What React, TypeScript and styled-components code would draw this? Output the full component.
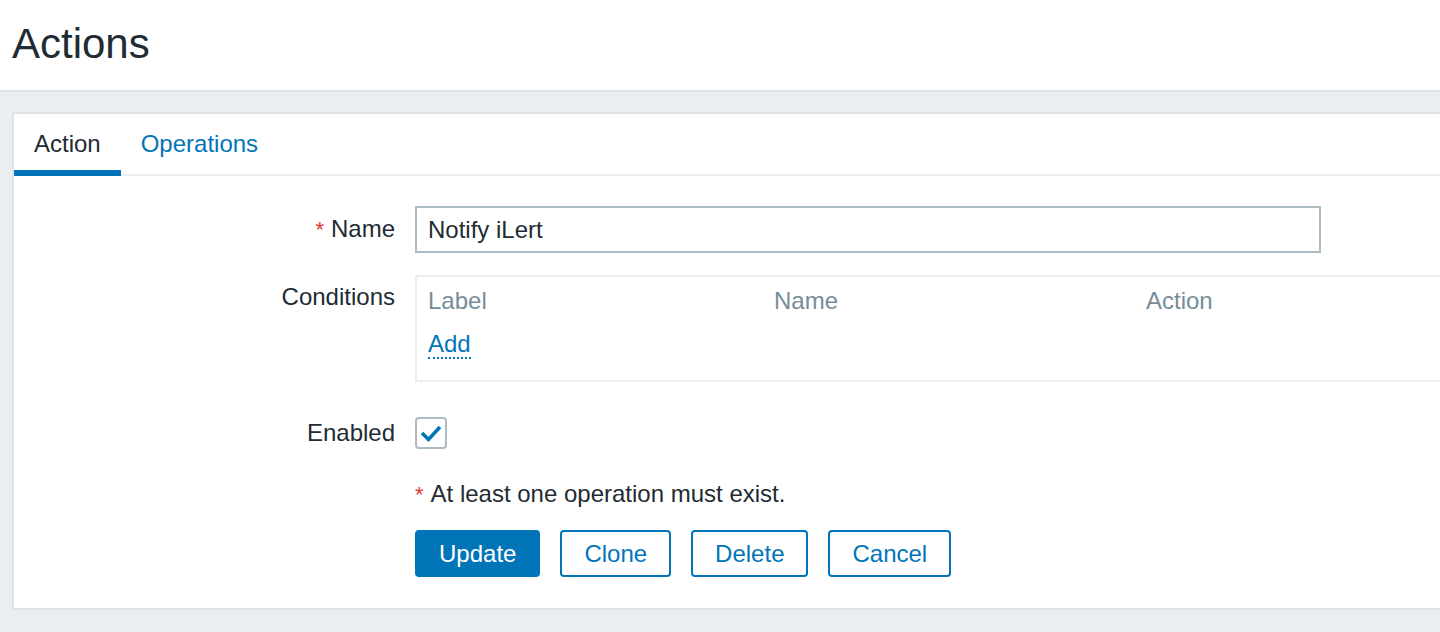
import React from "react";
import styled, { createGlobalStyle } from "styled-components";

const Global = createGlobalStyle`
  html, body {
    margin: 0;
    padding: 0;
    background: #ebeef0;
    overflow: hidden;
  }
  body {
    font-family: "Liberation Sans", Arial, Helvetica, sans-serif;
    color: #1f2c33;
  }
  * { box-sizing: border-box; }
`;

const Page = styled.div`
  width: 1440px;
  height: 632px;
  overflow: hidden;
  background: #ebeef0;
`;

const Header = styled.header`
  height: 92px;
  background: #ffffff;
  border-bottom: 2px solid #dde3e7;
  display: flex;
  align-items: center;
  padding: 0 0 2px 12px;
`;

const Title = styled.h1`
  margin: 0;
  font-size: 42px;
  font-weight: 400;
  line-height: 48px;
  color: #1f2c33;
`;

const Main = styled.main`
  padding: 20px 0 0 12px;
`;

const Panel = styled.section`
  width: 1600px;
  height: 498px;
  background: #ffffff;
  border: 2px solid #dfe4e7;
`;

const Tabs = styled.nav`
  display: flex;
  height: 62px;
  border-bottom: 2px solid #ebeef0;
`;

const Tab = styled.div<{ $active?: boolean }>`
  height: 62px;
  margin-bottom: -2px;
  padding: 0 20px 2px;
  display: flex;
  align-items: center;
  font-size: 24px;
  color: ${(p) => (p.$active ? "#1f2c33" : "#0275b8")};
  box-shadow: ${(p) => (p.$active ? "inset 0 -6px 0 #0275b8" : "none")};
`;

const Form = styled.div`
  padding-top: 30px;
  display: flex;
  flex-direction: column;
`;

const Row = styled.div<{ $align?: string; $mt?: number }>`
  display: grid;
  grid-template-columns: 381px 1fr;
  column-gap: 20px;
  align-items: ${(p) => p.$align || "center"};
  margin-top: ${(p) => p.$mt || 0}px;
`;

const Label = styled.label<{ $pt?: number }>`
  text-align: right;
  font-size: 24px;
  line-height: 28px;
  padding-top: ${(p) => p.$pt || 0}px;
  color: #1f2c33;
`;

const Req = styled.span`
  color: #e33734;
  font-size: 22px;
  margin-right: 7px;
`;

const Input = styled.input`
  width: 906px;
  height: 47px;
  border: 2px solid #acbbc2;
  padding: 0 11px;
  font-family: inherit;
  font-size: 24px;
  color: #1f2c33;
  outline: none;
  background: #fff;
`;

const CondBox = styled.div`
  width: 1200px;
  border: 2px solid #ebeef0;
  padding: 10px 11px 21px;
  display: flex;
  flex-direction: column;
`;

const CondHead = styled.div`
  display: grid;
  grid-template-columns: 346px 372px auto;
  font-size: 24px;
  line-height: 28px;
  color: #768d99;
`;

const AddRow = styled.div`
  display: flex;
  margin-top: 16px;
`;

const Link = styled.a`
  display: inline-block;
  font-size: 24px;
  line-height: 26px;
  color: #0275b8;
  text-decoration: none;
  border-bottom: 2px dotted #0275b8;
  cursor: pointer;
`;

const CheckBox = styled.span`
  width: 32px;
  height: 32px;
  border: 2px solid #acbbc2;
  border-radius: 4px;
  display: flex;
  align-items: center;
  justify-content: center;
  background: #fff;
`;

const Message = styled.div`
  margin-left: 401px;
  margin-top: 31px;
  font-size: 24px;
  line-height: 28px;
  color: #1f2c33;
`;

const Buttons = styled.div`
  margin-left: 401px;
  margin-top: 21px;
  display: flex;
  gap: 20px;
`;

const Button = styled.button<{ $primary?: boolean }>`
  height: 47px;
  padding: 0 22px;
  border: 2px solid #0275b8;
  border-radius: 4px;
  font-family: inherit;
  font-size: 24px;
  background: ${(p) => (p.$primary ? "#0275b8" : "#ffffff")};
  color: ${(p) => (p.$primary ? "#ffffff" : "#0275b8")};
  cursor: pointer;
`;

export default function App() {
  return (
    <Page>
      <Global />
      <Header>
        <Title>Actions</Title>
      </Header>
      <Main>
        <Panel>
          <Tabs>
            <Tab $active>Action</Tab>
            <Tab>Operations</Tab>
          </Tabs>
          <Form>
            <Row>
              <Label>
                <Req>*</Req>Name
              </Label>
              <Input defaultValue="Notify iLert" />
            </Row>
            <Row $align="start" $mt={22}>
              <Label $pt={8}>Conditions</Label>
              <CondBox>
                <CondHead>
                  <span>Label</span>
                  <span>Name</span>
                  <span>Action</span>
                </CondHead>
                <AddRow>
                  <Link>Add</Link>
                </AddRow>
              </CondBox>
            </Row>
            <Row $mt={35}>
              <Label>Enabled</Label>
              <div>
                <CheckBox>
                  <svg width="24" height="24" viewBox="0 0 24 24">
                    <polyline
                      points="3,12 9.5,18.5 21,6"
                      fill="none"
                      stroke="#0275b8"
                      strokeWidth="3.6"
                    />
                  </svg>
                </CheckBox>
              </div>
            </Row>
            <Message>
              <Req>*</Req>At least one operation must exist.
            </Message>
            <Buttons>
              <Button $primary>Update</Button>
              <Button>Clone</Button>
              <Button>Delete</Button>
              <Button>Cancel</Button>
            </Buttons>
          </Form>
        </Panel>
      </Main>
    </Page>
  );
}
